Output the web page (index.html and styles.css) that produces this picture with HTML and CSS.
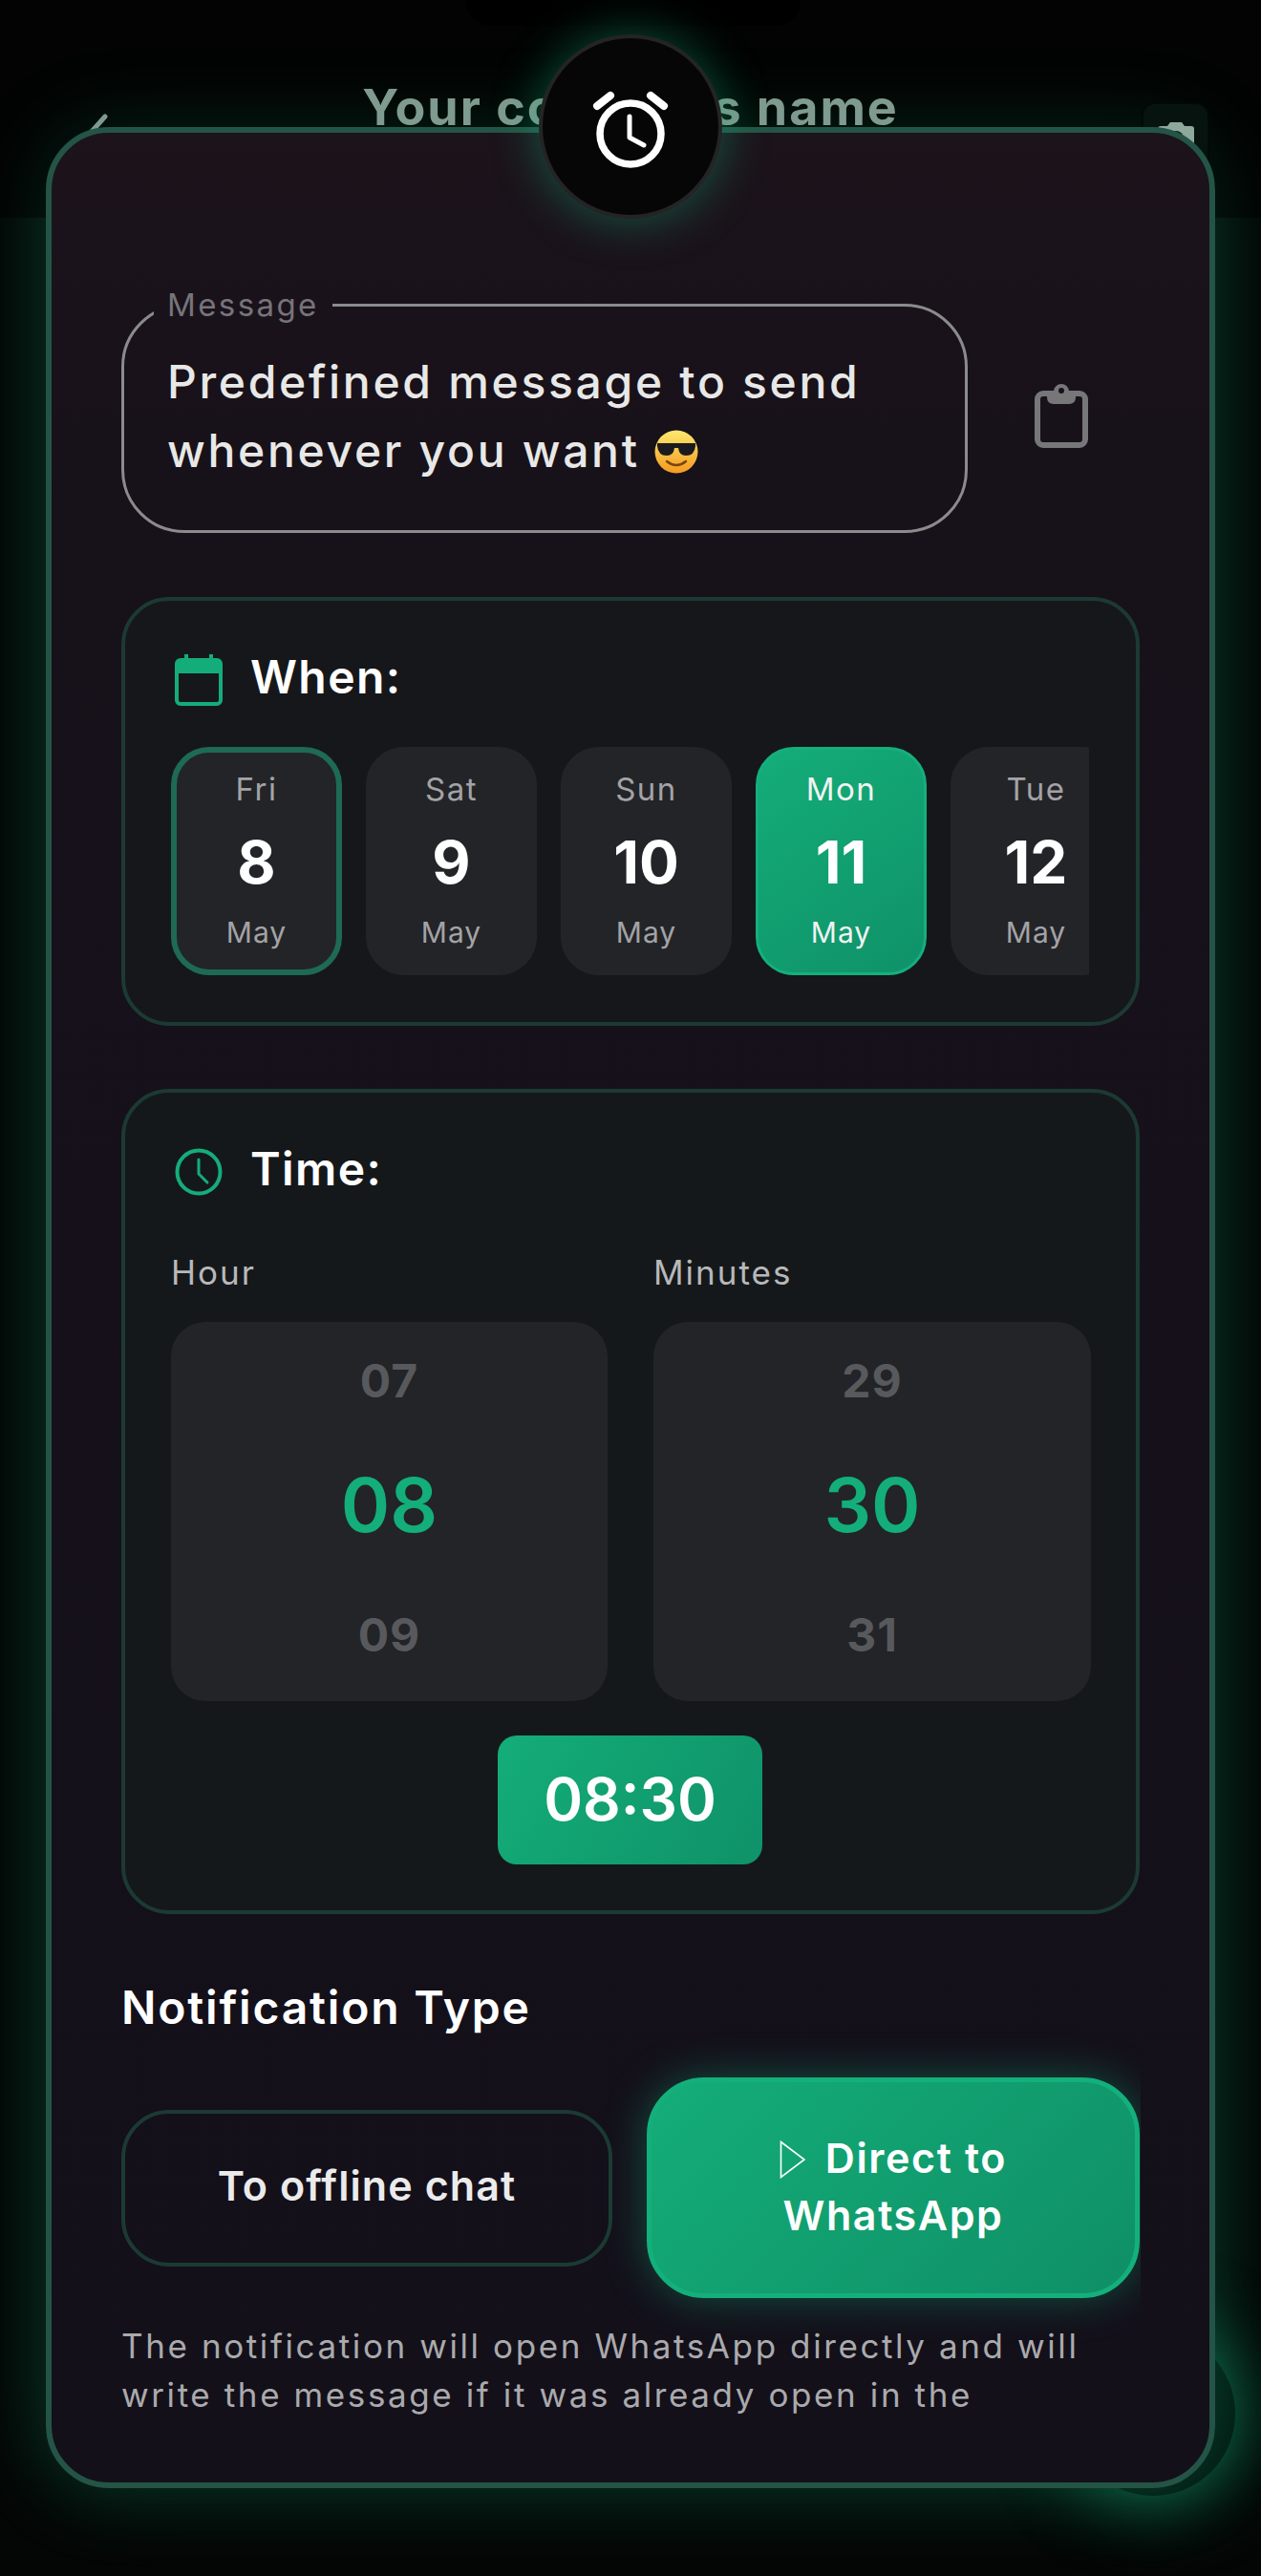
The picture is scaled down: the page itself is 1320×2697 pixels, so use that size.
FILE: index.html
```html
<!DOCTYPE html>
<html lang="en">
<head>
<meta charset="utf-8">
<title>Schedule message</title>
<link rel="stylesheet" href="styles.css">
</head>
<body>
<div class="stage">
	<div class="fab"></div>
	<div class="sheet-glow"></div>

	<header class="topbar">
		<svg class="back" width="50" height="70" viewBox="0 0 50 70"><path d="M42 6 L8 44 L42 82" fill="none" stroke="#7f9a8e" stroke-width="5" stroke-linecap="round"/></svg>
		<h1>Your contact's name</h1>
		<div class="cam-box">
			<svg width="40" height="32" viewBox="0 0 40 32"><path d="M4 5 H11 L14 1 H26 L29 5 H36 Q39 5 39 8 V32 H1 V8 Q1 5 4 5 Z" fill="#8fa89c"/><circle cx="20" cy="18" r="8" fill="#0c1f18"/><circle cx="20" cy="18" r="4" fill="#8fa89c"/></svg>
		</div>
	</header>

	<div class="notch"></div>

	<main class="sheet">
		<div class="scroller">
			<div class="msg-row">
				<fieldset class="msg-box">
					<legend>Message</legend>
					<p>Predefined message to send<br>whenever you want
						<svg class="emoji" width="46" height="46" viewBox="0 0 46 46">
							<defs><linearGradient id="face" x1="0" y1="0" x2="0" y2="1"><stop offset="0" stop-color="#fde96f"/><stop offset="1" stop-color="#f39a1f"/></linearGradient></defs>
							<circle cx="23" cy="23" r="22.5" fill="url(#face)"/>
							<path d="M3 14 H43 V17 Q42 27 33 27 Q26 27 25 19 H21 Q20 27 13 27 Q4 27 3 17 Z" fill="#1b1b1f"/>
							<path d="M13 33 Q23 41 33 33" fill="none" stroke="#7a4310" stroke-width="2.5" stroke-linecap="round"/>
						</svg>
					</p>
				</fieldset>
				<svg class="clip" width="56" height="68" viewBox="0 0 56 68">
					<rect x="3" y="11" width="50" height="54" rx="6" fill="none" stroke="#77777a" stroke-width="6"/>
					<path d="M13 9 H20 A8 8 0 0 1 36 9 H43 V15 Q43 22 36 22 H20 Q13 22 13 15 Z" fill="#77777a"/>
					<circle cx="28" cy="8" r="3" fill="#17111a"/>
				</svg>
			</div>

			<section class="card">
				<div class="card-title">
					<svg width="50" height="54" viewBox="0 0 50 54">
						<rect x="2" y="6" width="46" height="46" rx="4" fill="none" stroke="#14ad79" stroke-width="4"/>
						<path d="M2 20 V8 Q2 6 4 6 H10 V0 H14 V6 H36 V0 H40 V6 H46 Q48 6 48 8 V20 Z" fill="#14ad79"/>
					</svg>
					<h2>When:</h2>
				</div>
				<div class="days">
					<div class="day today"><span class="dname">Fri</span><span class="dnum">8</span><span class="dmon">May</span></div>
					<div class="day"><span class="dname">Sat</span><span class="dnum">9</span><span class="dmon">May</span></div>
					<div class="day"><span class="dname">Sun</span><span class="dnum">10</span><span class="dmon">May</span></div>
					<div class="day picked"><span class="dname">Mon</span><span class="dnum">11</span><span class="dmon">May</span></div>
					<div class="day"><span class="dname">Tue</span><span class="dnum">12</span><span class="dmon">May</span></div>
				</div>
			</section>

			<section class="card time-card">
				<div class="card-title">
					<svg width="50" height="54" viewBox="0 0 50 54">
						<circle cx="25" cy="27" r="22.5" fill="none" stroke="#14ad79" stroke-width="4"/>
						<path d="M25 14 V29 L34 38" fill="none" stroke="#14ad79" stroke-width="3" stroke-linecap="round" stroke-linejoin="round"/>
					</svg>
					<h2>Time:</h2>
				</div>
				<div class="pickers">
					<div class="picker-col">
						<label>Hour</label>
						<div class="picker"><span>07</span><b>08</b><span>09</span></div>
					</div>
					<div class="picker-col">
						<label>Minutes</label>
						<div class="picker"><span>29</span><b>30</b><span>31</span></div>
					</div>
				</div>
				<div class="time-badge">08:30</div>
			</section>

			<h3 class="notif-title">Notification Type</h3>
			<div class="notif-btns">
				<button class="btn-off">To offline chat</button>
				<button class="btn-on"><svg width="28" height="40" viewBox="0 0 28 40"><path d="M1.5 1.5 L26 20 L1.5 38.5 Z" fill="none" stroke="#fff" stroke-width="1.6"/></svg>Direct to<br>WhatsApp</button>
			</div>
			<p class="notif-desc">The notification will open WhatsApp directly and will write the message if it was already open in the</p>
		</div>
	</main>

	<div class="alarm">
		<svg width="120" height="120" viewBox="0 0 120 120">
			<circle cx="60" cy="67" r="32" fill="none" stroke="#fff" stroke-width="7.5"/>
			<path d="M59 49 V71 L74 79" fill="none" stroke="#fff" stroke-width="5" stroke-linecap="round" stroke-linejoin="round"/>
			<path d="M25 38 L39 27 M81 27 L95 38" fill="none" stroke="#fff" stroke-width="8" stroke-linecap="round"/>
		</svg>
	</div>
</div>
</body>
</html>
```

FILE: styles.css
```css
* {
	box-sizing: border-box;
}
body {
	margin: 0;
	background: #040605;
	font-family: Inter, "Liberation Sans", sans-serif;
	color: #fff;
}
.stage {
	position: relative;
	width: 1320px;
	height: 2697px;
	overflow: hidden;
}

/* stuff behind the sheet */
.fab {
	position: absolute;
	left: 1121px;
	top: 2441px;
	width: 172px;
	height: 172px;
	border-radius: 50%;
	background: #03150f;
	box-shadow: 0 0 80px rgba(20, 176, 124, .65);
}
.sheet-glow {
	position: absolute;
	left: 48px;
	top: 133px;
	width: 1224px;
	height: 2472px;
	border-radius: 66px;
	box-shadow: 0 0 80px rgba(20, 176, 124, .32);
}
.topbar {
	position: absolute;
	left: 0;
	top: 0;
	width: 1320px;
	height: 228px;
	background: rgba(0, 0, 0, .45);
}
.topbar h1 {
	margin: 84px 0 0;
	font-size: 52px;
	line-height: 58px;
	font-weight: 700;
	letter-spacing: 2px;
	text-align: center;
	color: #7f9a8e;
}
.back {
	position: absolute;
	left: 68px;
	top: 116px;
}
.cam-box {
	position: absolute;
	left: 1195px;
	top: 107px;
	width: 71px;
	height: 100px;
	padding-top: 18px;
	text-align: center;
	background: #06130f;
	border: 2px solid #030806;
	border-radius: 14px;
}
.notch {
	position: absolute;
	left: 488px;
	top: 0;
	width: 350px;
	height: 27px;
	background: #000;
	border-radius: 0 0 26px 26px;
}

/* the sheet */
.sheet {
	position: absolute;
	left: 48px;
	top: 133px;
	width: 1224px;
	height: 2472px;
	border: 6px solid #245446;
	border-radius: 66px;
	background: linear-gradient(#1c131b, #17111a 15%, #13101a);
	overflow: hidden;
}
.scroller {
	height: 100%;
	margin-right: 72px;
	padding: 162px 0 0 73px;
	overflow: hidden;
}
.msg-row {
	display: flex;
	align-items: center;
	width: 1066px;
}
.msg-box {
	width: 886px;
	height: 257px;
	margin: 0;
	padding: 27px 45px 0;
	border: 3px solid #8b8b8d;
	border-radius: 66px;
}
.msg-box legend {
	margin-left: -14px;
	padding: 0 14px;
	font-size: 33px;
	line-height: 36px;
	letter-spacing: 2.4px;
	color: #77747a;
}
.msg-box p {
	margin: 0;
	font-size: 48px;
	line-height: 72px;
	letter-spacing: 2.7px;
	font-weight: 500;
	color: #e8e8e6;
}
.emoji {
	vertical-align: -7px;
}
.clip {
	margin: 10px 0 0 70px;
}

.card {
	width: 1066px;
	height: 449px;
	margin-top: 67px;
	padding: 56px 49px 0 48px;
	border: 4px solid #1c3a33;
	border-radius: 50px;
	background: #16171b;
}
.time-card {
	height: 864px;
	margin-top: 66px;
	background: #15181b;
}
.card-title {
	display: flex;
	align-items: center;
	gap: 29px;
	height: 54px;
	padding-left: 4px;
}
.card-title h2 {
	margin: -8px 0 0;
	font-size: 48px;
	font-weight: 600;
	letter-spacing: 1.4px;
}

.days {
	display: flex;
	gap: 25px;
	margin-top: 43px;
	overflow: hidden;
}
.day {
	flex: 0 0 179px;
	height: 239px;
	display: flex;
	flex-direction: column;
	align-items: center;
	padding-top: 17px;
	border: 5px solid #232428;
	border-radius: 40px;
	background: #232428;
	color: #a3a3a6;
}
.day.today {
	padding-top: 16px;
	border: 6px solid #1e6a53;
}
.day.picked {
	padding-top: 19px;
	border: 3px solid #14b07c;
	background: linear-gradient(145deg, #14ad79, #0f9268);
	color: #f2f2f2;
}
.dname {
	font-size: 33px;
	line-height: 44px;
	letter-spacing: 1.5px;
}
.dnum {
	margin-top: 18px;
	font-size: 62px;
	line-height: 74px;
	font-weight: 700;
	color: #fff;
}
.dmon {
	margin-top: 16px;
	font-size: 30px;
	line-height: 40px;
	letter-spacing: 1px;
}

.pickers {
	display: grid;
	grid-template-columns: 457px 458px;
	gap: 48px;
	margin-top: 58px;
}
.picker-col label {
	display: block;
	height: 72px;
	font-size: 35px;
	line-height: 40px;
	letter-spacing: 2px;
	color: #b8b8ba;
}
.picker {
	height: 397px;
	display: flex;
	flex-direction: column;
	justify-content: space-between;
	align-items: center;
	padding: 32px 0 39px;
	border-radius: 36px;
	background: #222428;
}
.picker span {
	font-size: 48px;
	line-height: 60px;
	font-weight: 700;
	letter-spacing: 1px;
	color: #58595c;
}
.picker b {
	margin-top: -6px;
	font-size: 78px;
	line-height: 90px;
	font-weight: 600;
	color: #13ae7a;
}
.time-badge {
	width: 277px;
	height: 135px;
	margin: 36px auto 0;
	border-radius: 20px;
	background: linear-gradient(120deg, #14ad79, #0f9268);
	font-size: 62px;
	line-height: 133px;
	font-weight: 600;
	text-align: center;
}

.notif-title {
	margin: 70px 0 0;
	font-size: 48px;
	line-height: 56px;
	font-weight: 600;
	letter-spacing: 1.8px;
}
.notif-btns {
	display: flex;
	align-items: center;
	gap: 36px;
	width: 1066px;
	margin-top: 45px;
}
.notif-btns button {
	flex: 1;
	font-family: inherit;
	font-weight: 600;
	font-size: 43px;
	letter-spacing: 1.1px;
	padding: 0 0 6px;
}
.btn-off {
	height: 164px;
	border: 4px solid #1c3a33;
	border-radius: 50px;
	background: transparent;
	color: #ebebeb;
}
.notif-btns .btn-on {
	height: 231px;
	border: 5px solid #14b07c;
	border-radius: 60px;
	background: linear-gradient(135deg, #14ad79, #0f8f66);
	color: #fff;
	line-height: 60px;
	letter-spacing: 1.6px;
	padding-bottom: 4px;
	box-shadow: 0 0 44px rgba(20, 176, 124, .4);
}
.btn-on svg {
	vertical-align: -6px;
	margin-right: 20px;
}
.notif-desc {
	margin: 25px 0 0;
	width: 1040px;
	font-size: 35px;
	line-height: 51px;
	letter-spacing: 2.6px;
	color: #aaaaad;
}

.alarm {
	position: absolute;
	left: 564px;
	top: 36px;
	width: 192px;
	height: 193px;
	display: flex;
	align-items: center;
	justify-content: center;
	border: 4px solid #242424;
	border-radius: 50%;
	background: #060606;
	box-shadow: 0 0 50px rgba(20, 176, 124, .45);
}
```
